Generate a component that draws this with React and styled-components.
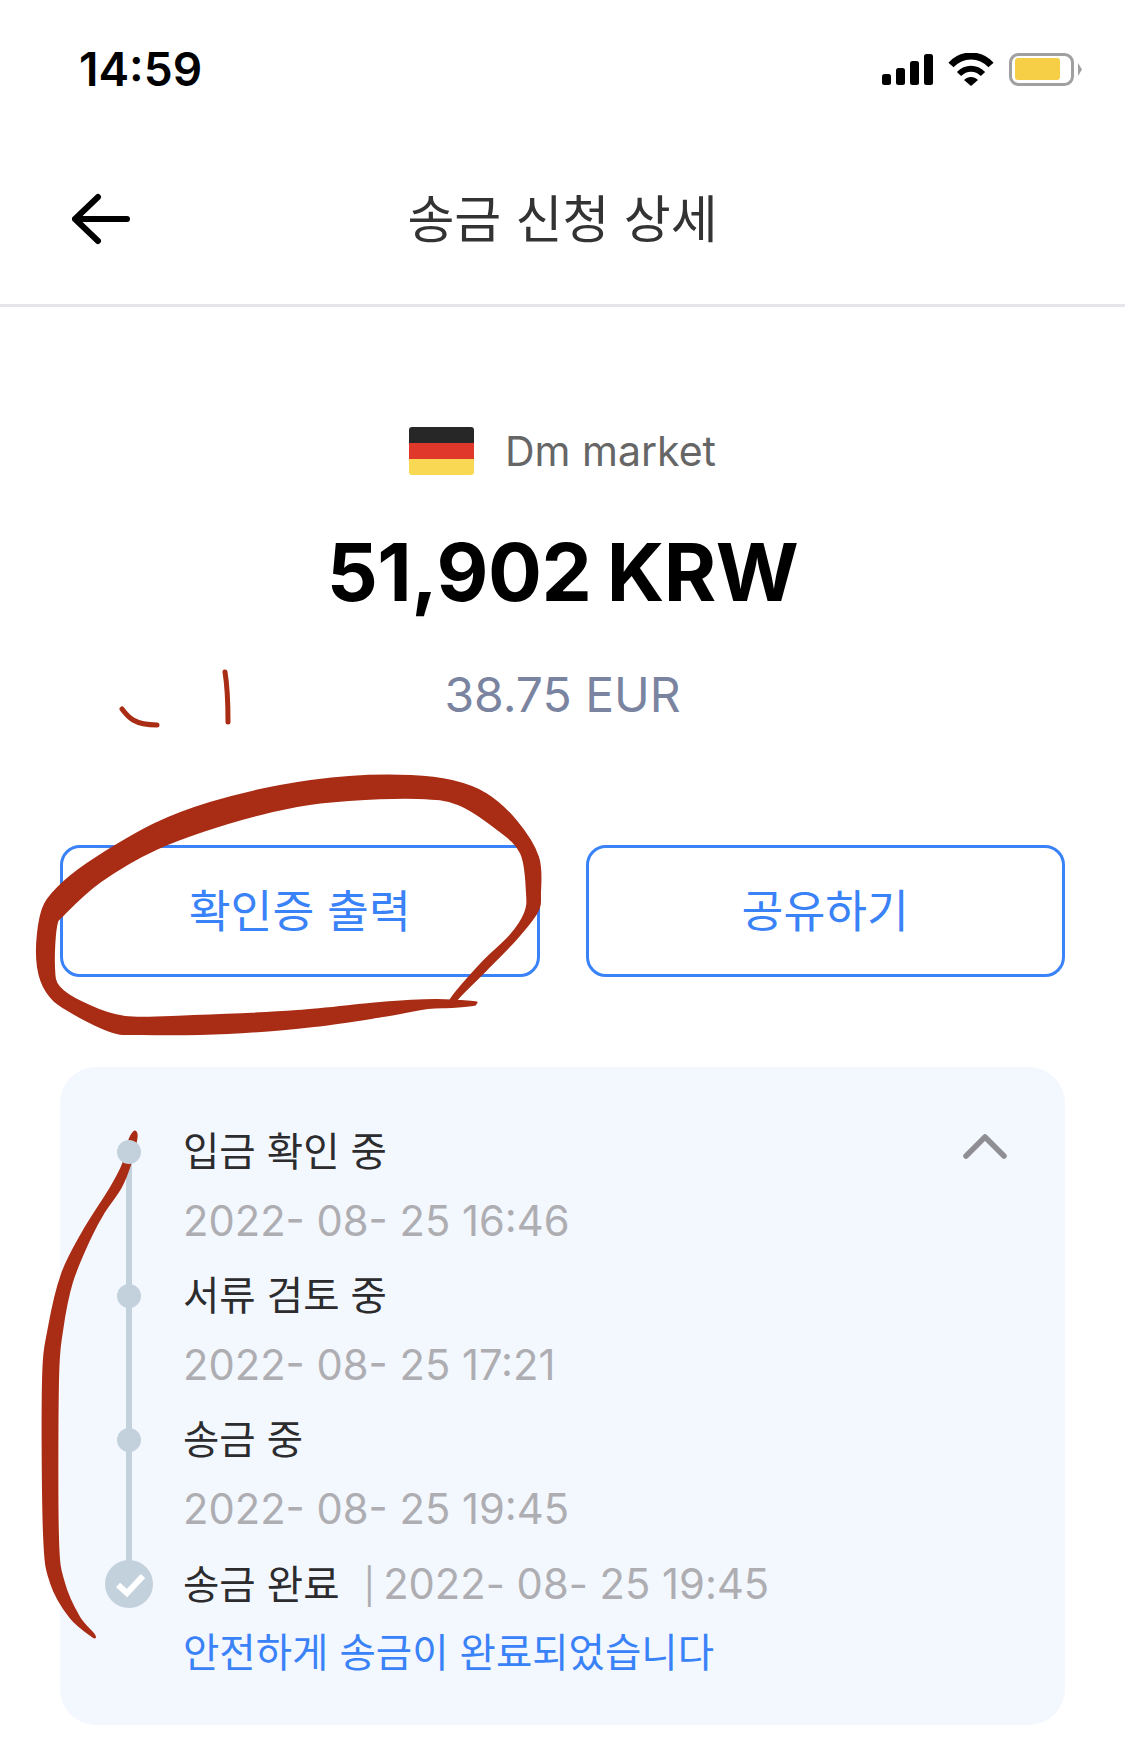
import styled, { createGlobalStyle } from "styled-components";

const GlobalStyle = createGlobalStyle`
    html, body {
        margin: 0;
        padding: 0;
        background: #fff;
    }
    body {
        font-family: Inter, "Noto Sans CJK KR", sans-serif;
    }
`

const Page = styled.div`
    position: relative;
    width: 1125px;
    height: 1748px;
    overflow: hidden;
    background: #fff;
`

const StatusBar = styled.div`
    height: 138px;
    box-sizing: border-box;
    display: flex;
    align-items: center;
    justify-content: space-between;
    padding: 0 43px 0 79px;
`

const Clock = styled.span`
    font-size: 46px;
    font-weight: 600;
    color: #000;
`

const StatusIcons = styled.div`
    display: flex;
    align-items: center;
    gap: 15px;
`

const Header = styled.header`
    height: 169px;
    box-sizing: border-box;
    display: grid;
    grid-template-columns: 1fr auto 1fr;
    align-items: center;
    padding: 0 72px 8px;
    border-bottom: 3px solid #e5e5ea;
`

const BackArrow = styled.svg`
    margin-top: 4px;
`

const Title = styled.h1`
    margin: 0 0 3px;
    font-size: 51px;
    font-weight: 400;
    color: #333;
`

const Summary = styled.section`
    display: flex;
    flex-direction: column;
    align-items: center;
    padding-top: 120px;
`

const Merchant = styled.div`
    display: flex;
    align-items: center;
    gap: 31px;
    height: 48px;
`

const Flag = styled.div`
    width: 65px;
    height: 48px;
    border-radius: 3px;
    overflow: hidden;
    display: flex;
    flex-direction: column;
`

const FlagStripe = styled.div`
    flex: 1;
    background: ${props => props.color};
`

const MerchantName = styled.span`
    font-size: 41px;
    color: #666;
`

const Amount = styled.div`
    margin-top: 47px;
    height: 100px;
    line-height: 100px;
    font-size: 80px;
    font-weight: 700;
    letter-spacing: -0.5px;
    word-spacing: -3px;
    color: #000;
`

const Converted = styled.div`
    margin-top: 43px;
    height: 60px;
    line-height: 60px;
    font-size: 48px;
    color: #7a84a0;
`

const Actions = styled.div`
    display: grid;
    grid-template-columns: 1fr 1fr;
    gap: 46px;
    padding: 0 60px;
    margin-top: 120px;
`

const ActionButton = styled.button`
    height: 132px;
    padding: 0 0 6px;
    background: #fff;
    border: 3px solid #3a82f7;
    border-radius: 20px;
    font-family: inherit;
    font-size: 45.5px;
    color: #3a82f7;
`

const Panel = styled.section`
    position: relative;
    margin: 90px 60px 0;
    padding: 55px 0 42px;
    background: #f3f7fe;
    border-radius: 36px;
`

const Collapse = styled.svg`
    position: absolute;
    top: 66px;
    right: 58px;
`

const Step = styled.div`
    display: grid;
    grid-template-columns: 123px 1fr;
    padding-bottom: ${props => (props.$last ? "0" : "15px")};
`

const Rail = styled.div`
    position: relative;
    display: flex;
    justify-content: center;
    height: 60px;
    margin-left: 15px;
    width: 108px;
    align-items: center;

    &::after {
        content: "";
        display: ${props => (props.$last ? "none" : "block")};
        position: absolute;
        left: 51px;
        top: 30px;
        width: 6px;
        height: 144px;
        background: #c3d1dd;
    }
`

const Dot = styled.span`
    position: relative;
    z-index: 1;
    width: 24px;
    height: 24px;
    border-radius: 50%;
    background: #c3d1dd;
`

const DoneMark = styled.svg`
    position: relative;
    z-index: 1;
`

const StepLabel = styled.div`
    height: 60px;
    line-height: 60px;
    font-size: 39.5px;
    color: #2c2c2e;
    white-space: nowrap;
`

const StepDate = styled.div`
    margin-top: 9px;
    height: 60px;
    line-height: 60px;
    font-size: 41.7px;
    color: #aeaeb2;
`

const Pipe = styled.span`
    margin-left: 24px;
    margin-right: 8px;
    font-size: 35px;
    color: #aeaeb2;
`

const InlineDate = styled.span`
    font-size: 41.7px;
    color: #aeaeb2;
`

const StepNote = styled.div`
    margin-top: 9px;
    height: 60px;
    line-height: 60px;
    font-size: 39.5px;
    color: #3a82f7;
`

const Scribbles = styled.svg`
    position: absolute;
    left: 0;
    top: 0;
    pointer-events: none;
`

// closed smooth outline through hand-picked points (catmull-rom)
function smooth(pts) {
    const n = pts.length;
    let d = `M${pts[0][0]} ${pts[0][1]}`;
    for (let i = 0; i < n; i++) {
        const p0 = pts[(i - 1 + n) % n];
        const p1 = pts[i];
        const p2 = pts[(i + 1) % n];
        const p3 = pts[(i + 2) % n];
        const c1 = [p1[0] + (p2[0] - p0[0]) / 6, p1[1] + (p2[1] - p0[1]) / 6];
        const c2 = [p2[0] - (p3[0] - p1[0]) / 6, p2[1] - (p3[1] - p1[1]) / 6];
        d += `C${c1[0]} ${c1[1]} ${c2[0]} ${c2[1]} ${p2[0]} ${p2[1]}`;
    }
    return d + "Z";
}

const ringOutline = [
    [473, 1002], [435, 1000], [380, 1003], [297, 1011], [193, 1016], [125, 1017], [83, 1003], [59, 987],
    [54, 967], [56, 927], [64, 914], [101, 881], [156, 849], [228, 823], [297, 806], [349, 800],
    [418, 798], [458, 804], [496, 828], [521, 853], [527, 893], [525, 913], [510, 936], [483, 962],
    [451, 999], [451, 1007], [459, 997], [486, 970], [516, 939], [537, 912], [540, 893], [538, 857],
    [516, 821], [486, 794], [452, 781], [411, 776], [349, 777], [280, 786], [210, 803], [155, 824],
    [96, 858], [65, 881], [45, 904], [38, 933], [38, 967], [47, 992], [66, 1009], [110, 1031],
    [141, 1034], [228, 1033], [314, 1026], [383, 1016], [428, 1008], [452, 1007], [473, 1005], [475, 1003.5],
];

const railOutline = [
    [134, 1132], [129, 1141], [123, 1164], [110, 1189], [83, 1232], [62, 1274], [49, 1327], [43, 1381],
    [44, 1534], [51, 1583], [70, 1617], [92, 1636], [93.5, 1634], [79, 1617], [64, 1583], [58, 1538],
    [58, 1381], [62, 1331], [72, 1282], [91, 1236], [104, 1212], [121, 1187], [131, 1162], [136, 1141], [136.5, 1134],
];

const steps = [
    { label: "입금 확인 중", date: "2022- 08- 25 16:46" },
    { label: "서류 검토 중", date: "2022- 08- 25 17:21" },
    { label: "송금 중", date: "2022- 08- 25 19:45" },
];

export default function App() {
    return (
        <Page>
            <GlobalStyle />
            <StatusBar>
                <Clock>14:59</Clock>
                <StatusIcons>
                    <svg width="51" height="31" viewBox="0 0 51 31">
                        <rect x="0" y="20" width="9" height="11" rx="2.5" fill="#000" />
                        <rect x="14" y="14" width="9" height="17" rx="2.5" fill="#000" />
                        <rect x="28" y="7" width="9" height="24" rx="2.5" fill="#000" />
                        <rect x="42" y="0" width="9" height="31" rx="2.5" fill="#000" />
                    </svg>
                    <svg width="46" height="33" viewBox="0 0 46 33">
                        <path d="M3 12C14 0 32 0 43 12" fill="none" stroke="#000" strokeWidth="7" />
                        <path d="M11 21C18 14 28 14 35 21" fill="none" stroke="#000" strokeWidth="6" />
                        <path d="M16 27C20 23 26 23 30 27L23 33Z" fill="#000" />
                    </svg>
                    <svg width="73" height="33" viewBox="0 0 73 33">
                        <rect x="1.5" y="1.5" width="62" height="30" rx="8" fill="#fff" stroke="#a0a0a0" strokeWidth="3" />
                        <rect x="6" y="5" width="45" height="22" rx="3" fill="#f6cf46" />
                        <path d="M69 10L73 16.5L69 23Z" fill="#a0a0a0" />
                    </svg>
                </StatusIcons>
            </StatusBar>
            <Header>
                <BackArrow width="58" height="52" viewBox="0 0 58 52">
                    <path d="M26 4L3 26L26 48M3 26H55" fill="none" stroke="#000" strokeWidth="6" strokeLinecap="round" strokeLinejoin="round" />
                </BackArrow>
                <Title>송금 신청 상세</Title>
            </Header>
            <Summary>
                <Merchant>
                    <Flag>
                        <FlagStripe color="#272727" />
                        <FlagStripe color="#e0392b" />
                        <FlagStripe color="#f9d853" />
                    </Flag>
                    <MerchantName>Dm market</MerchantName>
                </Merchant>
                <Amount>51,902 KRW</Amount>
                <Converted>38.75 EUR</Converted>
            </Summary>
            <Actions>
                <ActionButton>확인증 출력</ActionButton>
                <ActionButton>공유하기</ActionButton>
            </Actions>
            <Panel>
                <Collapse width="44" height="26" viewBox="0 0 44 26">
                    <path d="M3 23L22 4L41 23" fill="none" stroke="#8e8e93" strokeWidth="5.5" strokeLinecap="round" strokeLinejoin="round" />
                </Collapse>
                {steps.map(step => (
                    <Step key={step.date + step.label}>
                        <Rail>
                            <Dot />
                        </Rail>
                        <div>
                            <StepLabel>{step.label}</StepLabel>
                            <StepDate>{step.date}</StepDate>
                        </div>
                    </Step>
                ))}
                <Step $last>
                    <Rail $last>
                        <DoneMark width="48" height="48" viewBox="0 0 48 48">
                            <circle cx="24" cy="24" r="24" fill="#c3d1dd" />
                            <path d="M13 25L22 33L38 16" fill="none" stroke="#fff" strokeWidth="6" />
                        </DoneMark>
                    </Rail>
                    <div>
                        <StepLabel>
                            송금 완료<Pipe>|</Pipe><InlineDate>2022- 08- 25 19:45</InlineDate>
                        </StepLabel>
                        <StepNote>안전하게 송금이 완료되었습니다</StepNote>
                    </div>
                </Step>
            </Panel>
            <Scribbles width="1125" height="1748" viewBox="0 0 1125 1748">
                <path d={smooth(ringOutline)} fill="#a92c15" stroke="#a92c15" strokeWidth="2" strokeLinejoin="round" />
                <path d={smooth(railOutline)} fill="#a92c15" stroke="#a92c15" strokeWidth="2" strokeLinejoin="round" />
                <path d="M225 672C228 690 228 705 228 722" fill="none" stroke="#a92c15" strokeWidth="5" strokeLinecap="round" />
                <path d="M122 709C128 717 134 725 157 725" fill="none" stroke="#a92c15" strokeWidth="5" strokeLinecap="round" />
            </Scribbles>
        </Page>
    );
}
